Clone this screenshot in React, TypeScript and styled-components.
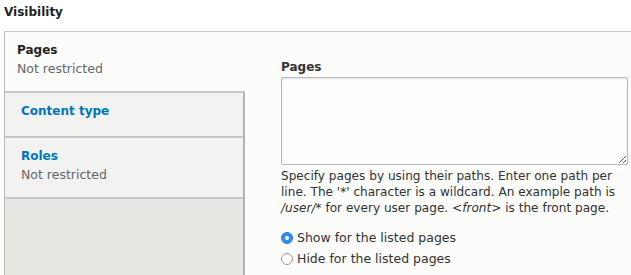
import React, { useState } from 'react';
import styled, { createGlobalStyle } from 'styled-components';

const GlobalStyle = createGlobalStyle`
  body {
    margin: 0;
    background: #fff;
    font-family: 'DejaVu Sans', Verdana, sans-serif;
    color: #333;
  }
`;

interface ITab {
  id: string;
  title: string;
  summary?: string;
}

const tabs: ITab[] = [
  { id: 'pages', title: 'Pages', summary: 'Not restricted' },
  { id: 'type', title: 'Content type' },
  { id: 'roles', title: 'Roles', summary: 'Not restricted' },
];

export default function App() {
  const [active, setActive] = useState<string>('pages');
  const [mode, setMode] = useState<string>('show');

  return (
    <StyledPage>
      <GlobalStyle />
      <h4 className="heading">Visibility</h4>
      <VerticalTabs>
        <TabMenu>
          {tabs.map((tab) => (
            <TabItem key={tab.id} selected={tab.id === active} onClick={() => setActive(tab.id)}>
              <strong className="title">{tab.title}</strong>
              <span className="summary">{tab.summary}</span>
            </TabItem>
          ))}
        </TabMenu>
        <TabPane>
          <label className="label" htmlFor="pages">
            Pages
          </label>
          <Textarea id="pages" />
          <Description>
            Specify pages by using their paths. Enter one path per line. The '*' character is a wildcard. An example
            path is <em>/user/*</em> for every user page. <em>&lt;front&gt;</em> is the front page.
          </Description>
          <RadioList>
            <RadioRow>
              <Radio checked={mode === 'show'} onClick={() => setMode('show')} />
              Show for the listed pages
            </RadioRow>
            <RadioRow>
              <Radio checked={mode === 'hide'} onClick={() => setMode('hide')} />
              Hide for the listed pages
            </RadioRow>
          </RadioList>
        </TabPane>
      </VerticalTabs>
    </StyledPage>
  );
}

const StyledPage = styled.div`
  width: 631px;
  height: 275px;
  overflow: hidden;
  padding: 4px 0 0 4px;
  box-sizing: border-box;
  .heading {
    margin: 0;
    font-size: 12px;
    line-height: 16px;
    font-weight: bold;
    color: #222;
  }
`;

const VerticalTabs = styled.div`
  display: flex;
  margin-top: 11px;
  height: 260px;
  border-top: 1px solid #c8c8c4;
`;

const TabMenu = styled.div`
  width: 238px;
  flex-shrink: 0;
  display: flex;
  flex-direction: column;
  background: #e6e5e1;
  border-left: 1px solid #bfbfba;
  border-right: 2px solid #b3b3b0;
`;

const TabItem = styled.div<{ selected: boolean }>`
  display: flex;
  flex-direction: column;
  gap: 3px;
  padding: 10px 12px 14px ${(props) => (props.selected ? '12px' : '16px')};
  background: ${(props) => (props.selected ? '#fcfcfa' : '#f2f2f0')};
  border-bottom: 2px solid #c6c6c3;
  margin-right: ${(props) => (props.selected ? '-2px' : '0')};
  cursor: pointer;
  .title {
    font-size: 12px;
    line-height: 16px;
    font-weight: bold;
    color: ${(props) => (props.selected ? '#222' : '#0074bd')};
  }
  .summary {
    font-size: 12.5px;
    line-height: 16px;
    color: #666;
    &:empty {
      line-height: 0;
    }
  }
`;

const TabPane = styled.div`
  flex: 1;
  background: #fcfcfa;
  padding: 27px 0 0 36px;
  .label {
    display: block;
    font-size: 12px;
    line-height: 16px;
    font-weight: bold;
    color: #333;
    margin-bottom: 2px;
  }
`;

const Textarea = styled.textarea`
  display: block;
  box-sizing: border-box;
  width: 347px;
  height: 88px;
  margin: 0;
  border: 1px solid #b8b8b8;
  border-radius: 2px;
  background: #fefefe;
  box-shadow: inset 0 1px 2px rgba(0, 0, 0, 0.12);
  resize: vertical;
`;

const Description = styled.div`
  width: 340px;
  margin-top: 3px;
  font-size: 12.1px;
  line-height: 16px;
  color: #333;
`;

const RadioList = styled.div`
  margin-top: 14px;
  display: flex;
  flex-direction: column;
  gap: 5px;
`;

const RadioRow = styled.label`
  display: flex;
  align-items: center;
  gap: 4px;
  font-size: 12.5px;
  line-height: 16px;
  color: #333;
  cursor: pointer;
`;

const Radio = styled.span<{ checked: boolean }>`
  width: 12px;
  height: 12px;
  border-radius: 50%;
  box-sizing: border-box;
  flex-shrink: 0;
  position: relative;
  background: ${(props) => (props.checked ? '#2f8df4' : '#fff')};
  border: 1px solid ${(props) => (props.checked ? '#2a7fe0' : '#999')};
  &::after {
    content: '';
    display: ${(props) => (props.checked ? 'block' : 'none')};
    position: absolute;
    width: 4px;
    height: 4px;
    border-radius: 50%;
    background: #fff;
    left: 3px;
    top: 3px;
  }
`;
